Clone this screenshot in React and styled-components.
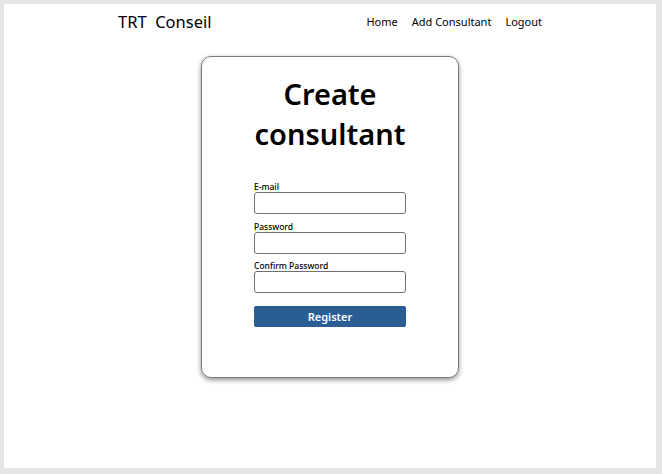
import styled, { createGlobalStyle } from 'styled-components';

const GlobalStyle = createGlobalStyle`
  * { box-sizing: border-box; }
  body {
    margin: 0;
    font-family: 'Noto Sans', 'Open Sans', sans-serif;
    background: #e4e4e4;
  }
`;

const Page = styled.div`
  width: 662px;
  height: 474px;
  padding: 4px 6px 6px 4px;
`;

const Sheet = styled.div`
  height: 100%;
  background: #ffffff;
  display: flex;
  flex-direction: column;
  align-items: center;
`;

const Header = styled.header`
  width: 424px;
  height: 35px;
  display: flex;
  align-items: center;
  justify-content: space-between;
  color: #000;
`;

const Brand = styled.div`
  font-size: 16.5px;
  white-space: pre;
`;

const Nav = styled.nav`
  display: flex;
  gap: 14px;
  font-size: 11px;
`;

const NavLink = styled.a`
  color: #000;
  text-decoration: none;
`;

const Card = styled.div`
  margin-top: 17px;
  width: 258px;
  height: 322px;
  border: 1px solid #7a7a7a;
  border-radius: 10px;
  box-shadow: 0 2px 5px rgba(0, 0, 0, 0.45);
  padding: 17px 52px 0;
  display: flex;
  flex-direction: column;
`;

const Title = styled.h1`
  margin: 0 0 27px;
  text-align: center;
  font-size: 29px;
  line-height: 40px;
  font-weight: 600;
  color: #000;
`;

const Field = styled.div`
  display: flex;
  flex-direction: column;
  margin-bottom: 6.5px;
`;

const Label = styled.label`
  font-size: 8.5px;
  font-weight: 500;
  line-height: 11px;
  color: #000;
`;

const Input = styled.input`
  height: 22px;
  width: 100%;
  border: 1px solid #6f6f6f;
  border-radius: 3px;
  background: #fff;
  padding: 2px 4px;
`;

const Button = styled.button`
  margin-top: 6.5px;
  height: 21px;
  width: 100%;
  border: none;
  border-radius: 2px;
  background: #2a5e93;
  color: #fff;
  font-family: inherit;
  font-size: 11px;
  font-weight: 600;
  cursor: pointer;
`;

export default function App() {
  return (
    <>
      <GlobalStyle />
      <Page>
        <Sheet>
          <Header>
            <Brand>TRT  Conseil</Brand>
            <Nav>
              <NavLink href="#">Home</NavLink>
              <NavLink href="#">Add Consultant</NavLink>
              <NavLink href="#">Logout</NavLink>
            </Nav>
          </Header>
          <Card>
            <Title>Create consultant</Title>
            <Field>
              <Label>E-mail</Label>
              <Input type="email" />
            </Field>
            <Field>
              <Label>Password</Label>
              <Input type="password" />
            </Field>
            <Field>
              <Label>Confirm Password</Label>
              <Input type="password" />
            </Field>
            <Button>Register</Button>
          </Card>
        </Sheet>
      </Page>
    </>
  );
}
